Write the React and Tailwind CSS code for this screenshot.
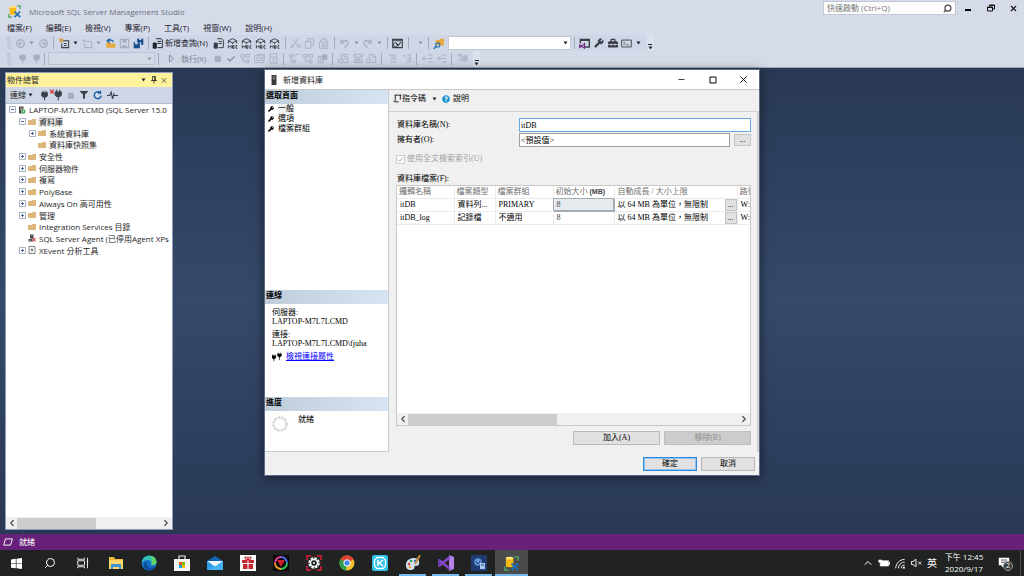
import { useState } from "react";
import clsx from "clsx";
import {
  ChevronLeft,
  ChevronRight,
  ChevronUp,
  Minus,
  Search,
  Square,
  Wrench,
  X,
} from "lucide-react";
import { FaCheck, FaFilter, FaPlug, FaQuestionCircle, FaToolbox } from "react-icons/fa";

const Svg = ({ size = "size-3", className, children }) => (
  <svg viewBox="0 0 16 16" fill="none" stroke="currentColor" className={clsx(size, "shrink-0", className)}>
    {children}
  </svg>
);

/* ---------- shared drawings ---------- */

const SsmsLogo = ({ size }) => (
  <Svg size={size}>
    <path d="M11 1h4v4M1 11v4h4" stroke="#4aa564" strokeWidth="1.6" />
    <path d="M2 2h8v9c-1 1.4-7 1.4-8 0z" fill="#f5b90f" stroke="none" />
    <ellipse cx="6" cy="2.300" rx="4" ry="1.500" fill="#ffe27a" stroke="none" />
    <path d="M8 8l7 7M15 8l-7 7" stroke="#1f6fb5" strokeWidth="2" />
  </Svg>
);

const Caret = ({ dim }) => (
  <svg viewBox="0 0 8 8" className={clsx("w-[9px] h-1 shrink-0", dim ? "text-[#8e95a5]" : "text-[#1e2330]")}>
    <path d="M0 1h8L4 7z" fill="currentColor" />
  </svg>
);

const FolderIcon = () => (
  <Svg size="size-2">
    <path d="M0 14V4h7l2-2h7v12z" fill="#dcb67a" stroke="none" />
  </Svg>
);

const ServerIcon = () => (
  <Svg size="size-2">
    <path d="M2 1h9v14H2z" fill="#424242" stroke="none" />
    <path d="M4 4h5M4 6.500h5" stroke="#fff" />
    <circle cx="11" cy="11" r="4.500" fill="#2f9e3f" stroke="#fff" />
    <path d="M10 9l3 2-3 2z" fill="#fff" stroke="none" />
  </Svg>
);

const AgentIcon = () => (
  <Svg size="size-2">
    <path d="M4 1h7v8H4zM1 10h8v5H1z" fill="#424242" stroke="none" />
    <path d="M6 4h3M3 12.500h3" stroke="#fff" />
    <path d="M9 8l6 7M15 8l-6 7" stroke="#d13438" strokeWidth="2.200" />
  </Svg>
);

const EventIcon = () => (
  <Svg size="size-2">
    <path d="M2 1h12v14H2z" fill="#fff" stroke="#555" strokeWidth="1.500" />
    <path d="M9 3L5 9h3l-1 4 4-6H8z" fill="#444" stroke="none" />
  </Svg>
);

/* ---------- toolbar drawings ---------- */

const icons = {
  back: (
    <>
      <circle cx="8" cy="8" r="5.500" strokeWidth="2" />
      <path d="M11 8H5M8 5L5 8l3 3" strokeWidth="1.500" />
    </>
  ),
  forward: (
    <>
      <circle cx="8" cy="8" r="5.500" strokeWidth="2" />
      <path d="M5 8h6M8 5l3 3-3 3" strokeWidth="1.500" />
    </>
  ),
  newProject: (
    <>
      <path d="M6 4h8v10H4V8M7 8h4M7 11h4" strokeWidth="1.500" />
      <path d="M3 0v7M0 3h7M1 1l5 5M6 1L1 6" stroke="#d98b1c" strokeWidth="1.200" />
    </>
  ),
  newItem: (
    <>
      <path d="M7 5h7v9H4V8" strokeWidth="1.500" />
      <path d="M3 1v6M0 4h6" strokeWidth="1.300" />
    </>
  ),
  open: (
    <>
      <path d="M2 14V6h5l1 2h7v6z" fill="#e5a93b" stroke="none" />
      <path d="M12 6c0-3-5-4-8-2M7 1L3 4l4 3" stroke="#1f5fa8" strokeWidth="1.800" />
    </>
  ),
  save: (
    <>
      <path d="M2 2h12v12H2z" strokeWidth="1.600" />
      <path d="M5 2h6v5H5zM5 10h6v4H5z" fill="currentColor" stroke="none" />
    </>
  ),
  saveAll: (
    <>
      <path d="M6 1h9v9h-3V6H6z" fill="#17528f" stroke="none" />
      <path d="M1 6h9v9H1z" fill="#17528f" stroke="none" />
      <path d="M3 6h4v3H3zM9 1h3v2H9z" fill="#d7deec" stroke="none" />
    </>
  ),
  query: (
    <>
      <path d="M6 1h7l2 2v11H8M8 5h5M8 8h5" strokeWidth="1.400" />
      <path d="M1 8c0-2 6-2 6 0v6c0 2-6 2-6 0z" fill="currentColor" stroke="none" />
    </>
  ),
  cube: (
    <>
      <path d="M2 8V4l6-3 6 3v4M2 4l6 3 6-3M8 7v2" strokeWidth="1.400" />
      <path d="M2 15v-4l2 2 2-2v4M8 11h2v4H8zM15 11h-2v4h2" strokeWidth="1.400" />
    </>
  ),
  cut: <path d="M4 1l6 9M12 1L6 10M3 14a2 2 0 110-4 2 2 0 010 4zM13 14a2 2 0 110-4 2 2 0 010 4z" strokeWidth="1.400" />,
  copy: <path d="M6 5V1h8v10h-4M2 5h8v10H2z" strokeWidth="1.400" />,
  paste: <path d="M4 5V3h2V1h4v2h3v3M2 6h12v9H2zM6 9h5v4H6z" strokeWidth="1.400" />,
  undo: <path d="M3 2v5h5M3 7c3-5 10-4 10 1 0 3-3 4-5 6" strokeWidth="2" />,
  redo: <path d="M13 2v5H8M13 7C10 2 3 3 3 8c0 3 3 4 5 6" strokeWidth="2" />,
  activity: (
    <>
      <path d="M1 2h14v12H1zM1 4h14" strokeWidth="1.600" />
      <path d="M6 8l3 3 4-5" strokeWidth="1.600" />
      <circle cx="5" cy="10" r="3" strokeWidth="1.400" />
    </>
  ),
  folderSearch: (
    <>
      <path d="M4 10V3h5l1-2h6v10z" fill="#e5a93b" stroke="none" />
      <circle cx="7" cy="10" r="3" stroke="#1f6fb5" strokeWidth="1.600" />
      <path d="M5 12l-4 4" stroke="#1f6fb5" strokeWidth="2" />
    </>
  ),
  vsWindow: (
    <>
      <path d="M2 8V2h13v11H9M2 3.500h13" strokeWidth="2" />
      <path d="M1 10l3 2 4-4v7l-4-3-3 2z" stroke="#68217a" strokeWidth="1.500" />
    </>
  ),
  console: <path d="M1 3h14v10H1zM4 6l2 2-2 2M8 10h3" strokeWidth="1.300" />,
  stop: <path d="M4 4h9v9H4z" fill="currentColor" stroke="none" />,
  play: <path d="M5 3v10l6-5z" strokeWidth="1.300" />,
  plan: <path d="M1 2h5v4H1zM9 2h5v4H9zM4 6v6h4M9 10h4v4H9zM6 4h3" strokeWidth="1.300" />,
  layers: <path d="M4 4V2h11v9h-2M1 4h12v10H1zM4 7h6v4H4z" strokeWidth="1.300" />,
  page: <path d="M3 1h10v14H3zM6 9h4M6 12h4M3 6h10" strokeWidth="1.300" />,
  diagram: <path d="M1 2h4v4H1zM5 4h4M9 2h5M3 6v6h3M6 10h3v4H6z" strokeWidth="1.300" />,
  results: (
    <>
      <path d="M7 2h8v8H7z" fill="currentColor" stroke="none" />
      <path d="M2 5h7v9H2zM4 8h3M4 11h3" strokeWidth="1.300" />
    </>
  ),
  text: <path d="M5 10V2h9v12H8M8 5h4M8 8h4M1 9h6v5H1z" strokeWidth="1.300" />,
  grid: <path d="M3 2h12v4H3zM6 6v8M10 6v8M3 10h12v4H3z" strokeWidth="1.400" />,
  file: <path d="M5 8V2h5l4 4v8H9M10 2v4h4M1 9h6v5H1z" strokeWidth="1.300" />,
  comment: <path d="M2 3h12M6 6h8M6 9h8M5 13h9" strokeWidth="1.300" />,
  uncomment: <path d="M8 3h6v10H8M9 7h4M9 10h4M2 4c3-2 5 0 3 3" strokeWidth="1.300" />,
  outdent: <path d="M9 3h6M9 8h6M9 13h6M7 8H1M4 5L1 8l3 3" strokeWidth="1.400" />,
  indent: <path d="M9 3h6M9 8h6M9 13h6M1 8h6M4 5l3 3-3 3" strokeWidth="1.400" />,
  params: <path d="M1 3h6M4 1v5M11 4a4 4 0 110 8 4 4 0 010-8zM8 8h6M11 5v6M2 8l4 4" strokeWidth="1.500" />,
  plugs: <path d="M7 4h8v4l-2 2h-4L7 8zM9 1v3M13 1v3M11 10v5" fill="currentColor" strokeWidth="1.500" />,
};

const ToolButton = ({ name, label, dim, children }) => (
  <button
    aria-label={label || name}
    className={clsx("w-[14px] h-[14px] shrink-0 flex items-center justify-center", dim ? "text-[#a9afbd]" : "text-[#3b3f4a]")}
  >
    {children || <Svg size="size-[11px]">{icons[name]}</Svg>}
  </button>
);

const Sep = () => <span className="w-px h-3 mx-[3px] shrink-0 bg-[#a3abba]" />;

const Grip = () => (
  <svg className="w-1 h-3 shrink-0 text-[#9da5b6]">
    <path d="M1 0v12M3 1v11" stroke="currentColor" strokeDasharray="1 1" />
  </svg>
);

const Overflow = () => (
  <button aria-label="toolbar options" className="w-[7px] h-4 ml-1 shrink-0 flex flex-col items-center justify-end pb-px bg-[#dce1ee]">
    <span className="w-1 h-px bg-[#1e2330] mb-px" />
    <Caret />
  </button>
);

const menus = ["檔案(F)", "編輯(E)", "檢視(V)", "專案(P)", "工具(T)", "視窗(W)", "說明(H)"];

const Header = () => (
  <header className="shrink-0 bg-[#d6dbe9] border-b border-[#a0a6b3] pb-px">
    <div className="flex items-start justify-between h-5">
      <div className="flex items-center gap-2 pl-2 pt-1 h-[19px]">
        <SsmsLogo size="size-[13px]" />
        <h1 className="text-[8px] text-[#6b7180]">Microsoft SQL Server Management Studio</h1>
      </div>
      <div className="flex items-center pt-px">
        <label className="w-[133px] h-[14px] flex items-center bg-[#fcfcfc] border border-[#c3c9d8] px-[3px] text-[#444]">
          <input
            aria-label="快速啟動"
            placeholder="快速啟動 (Ctrl+Q)"
            className="flex-1 min-w-0 text-[8px] leading-3 outline-none placeholder:text-[#777]"
          />
          <Search className="size-[9px] -scale-x-100" strokeWidth={3} />
        </label>
        <div className="flex text-[#111]">
          <button aria-label="minimize" className="w-6 h-[14px] flex items-center justify-center pt-1">
            <span className="w-[6px] h-[2px] bg-black" />
          </button>
          <button aria-label="restore" className="w-[22px] h-[14px] flex items-center justify-center">
            <Svg size="size-2">
              <path d="M5 5V2h10v8h-3M5 3h10M1 6h10v8H1zM1 7h10" strokeWidth="2" />
            </Svg>
          </button>
          <button aria-label="close" className="w-[22px] h-[14px] flex items-center justify-center">
            <X className="size-[9px]" strokeWidth={3} />
          </button>
        </div>
      </div>
    </div>

    <nav className="flex items-center gap-[14px] h-[15px] pl-[7px] text-[8px] text-[#1e2330]">
      {menus.map((menu) => (
        <button key={menu} className="whitespace-nowrap">{menu}</button>
      ))}
    </nav>

    {/* Standard toolbar */}
    <div className="flex">
      <div className="flex items-center h-4 pl-[7px] bg-[#cfd6e5] text-[8px]">
        <Grip />
        <div className="flex items-center pl-0.5">
          <ToolButton name="back" dim />
          <Caret dim />
          <ToolButton name="forward" dim />
        </div>
        <Sep />
        <ToolButton name="newProject" />
        <Caret />
        <ToolButton name="newItem" dim />
        <Caret dim />
        <ToolButton name="open" />
        <ToolButton name="save" dim />
        <ToolButton name="saveAll" />
        <Sep />
        <button className="flex items-center gap-0.5 mr-1 whitespace-nowrap text-[#1e2330]">
          <Svg size="size-[11px]">{icons.query}</Svg>
          新增查詢(N)
        </button>
        <ToolButton name="query" label="database engine query" />
        <ToolButton name="cube" label="MDX" />
        <ToolButton name="cube" label="DMX" />
        <ToolButton name="cube" label="XMLA" />
        <ToolButton name="cube" label="DAX" />
        <Sep />
        <ToolButton name="cut" dim />
        <ToolButton name="copy" dim />
        <ToolButton name="paste" dim />
        <Sep />
        <ToolButton name="undo" dim />
        <Caret dim />
        <ToolButton name="redo" dim />
        <Caret dim />
        <Sep />
        <ToolButton name="activity" />
        <Sep />
        <div className="flex items-center pl-1">
          <Caret dim />
        </div>
        <Sep />
        <div className="flex items-center gap-0.5">
          <ToolButton name="folderSearch" />
          <button aria-label="find" className="w-[123px] h-[14px] flex items-center justify-end bg-white border border-[#c3c9d8]">
            <Caret />
          </button>
        </div>
        <Sep />
        <ToolButton name="vsWindow" />
        <ToolButton label="properties">
          <Wrench className="size-[10px] fill-current" />
        </ToolButton>
        <ToolButton label="toolbox">
          <FaToolbox className="size-[10px]" />
        </ToolButton>
        <ToolButton name="console" />
        <Caret />
        <Overflow />
      </div>
    </div>

    {/* SQL editor toolbar */}
    <div className="flex">
      <div className="flex items-center h-[15px] pl-[7px] bg-[#cfd6e5] text-[8px]">
        <Grip />
        <div className="flex items-center pl-0.5">
          <ToolButton name="plugs" label="connect" dim />
          <ToolButton name="plugs" label="change connection" dim />
        </div>
        <Sep />
        <button aria-label="database" className="w-[107px] h-[13px] flex items-center justify-end border border-[#bcc4d4] bg-[#d3d9e7]">
          <Caret dim />
        </button>
        <Sep />
        <button className="flex items-center gap-1 mx-1 whitespace-nowrap text-[#7c8292]">
          <Svg size="size-[11px]">{icons.play}</Svg>
          執行(X)
        </button>
        <ToolButton name="stop" dim />
        <ToolButton label="parse" dim>
          <FaCheck className="size-2 text-[#8e94a3]" />
        </ToolButton>
        <ToolButton name="plan" dim />
        <ToolButton name="layers" dim />
        <ToolButton name="page" dim />
        <Sep />
        <ToolButton name="diagram" dim />
        <ToolButton name="plan" label="live statistics" dim />
        <ToolButton name="results" dim />
        <Sep />
        <ToolButton name="text" dim />
        <ToolButton name="grid" dim />
        <ToolButton name="file" dim />
        <Sep />
        <ToolButton name="comment" dim />
        <ToolButton name="uncomment" dim />
        <Sep />
        <ToolButton name="outdent" dim />
        <ToolButton name="indent" dim />
        <Sep />
        <ToolButton name="params" dim />
        <Overflow />
      </div>
    </div>
  </header>
);

/* ---------- object explorer ---------- */

const tree = [
  { name: "LAPTOP-M7L7LCMD (SQL Server 15.0", level: 0, toggle: "-", icon: <ServerIcon /> },
  { name: "資料庫", level: 1, toggle: "-", selected: true },
  { name: "系統資料庫", level: 2, toggle: "+" },
  { name: "資料庫快照集", level: 2 },
  { name: "安全性", level: 1, toggle: "+" },
  { name: "伺服器物件", level: 1, toggle: "+" },
  { name: "複寫", level: 1, toggle: "+" },
  { name: "PolyBase", level: 1, toggle: "+" },
  { name: "Always On 高可用性", level: 1, toggle: "+" },
  { name: "管理", level: 1, toggle: "+" },
  { name: "Integration Services 目錄", level: 1 },
  { name: "SQL Server Agent (已停用Agent XPs", level: 1, icon: <AgentIcon /> },
  { name: "XEvent 分析工具", level: 1, toggle: "+", icon: <EventIcon /> },
];

const indents = ["pl-[3px]", "pl-[13px]", "pl-[23px]"];

const Toggle = ({ type }) => (
  <svg viewBox="0 0 7 7" className="size-[7px] shrink-0">
    {type && (
      <>
        <path d="M.5.5h6v6h-6z" fill="#fff" stroke="#a9b1c0" />
        <path d={type === "+" ? "M2 3.500h3M3.500 2v3" : "M2 3.500h3"} stroke="#4a659b" />
      </>
    )}
  </svg>
);

const ScrollBar = ({ thumb }) => (
  <div className="flex items-center h-3 shrink-0 bg-[#f0f0f0] text-[#505050]">
    <button aria-label="scroll left" className="w-[11px] flex justify-center">
      <ChevronLeft className="size-[10px]" strokeWidth={3} />
    </button>
    <div className="flex-1 h-[11px]">
      <div className={clsx("h-full bg-[#cdcdcd]", thumb)} />
    </div>
    <button aria-label="scroll right" className="w-3 flex justify-center">
      <ChevronRight className="size-[10px]" strokeWidth={3} />
    </button>
  </div>
);

const ObjectExplorer = () => (
  <aside className="w-[168px] shrink-0 flex flex-col bg-white border border-[#8e9bbc] text-[8px] text-[#1e1e1e]">
    <div className="flex items-center h-[14px] pl-px pr-1 bg-[#fff29d]">
      <h2 className="flex-1">物件總管</h2>
      <Caret />
      <button aria-label="pin" className="w-3 flex justify-center">
        <Svg size="size-2">
          <path d="M5 1h6v8H5zM9 1v8M2 9h12M8 9v6" strokeWidth="1.500" />
        </Svg>
      </button>
      <button aria-label="close panel" className="w-2 flex justify-center">
        <X className="size-[9px]" strokeWidth={2} />
      </button>
    </div>
    <div className="flex items-center h-4 pl-1 bg-[#cfd6e5]">
      <button className="flex items-center whitespace-nowrap">
        連線 <Caret />
      </button>
      <ToolButton name="plugs" label="connect" />
      <ToolButton label="disconnect">
        <Svg size="size-[12px]">
          <path d="M7 4h8v4l-2 2h-4L7 8zM9 1v3M13 1v3M11 10v5" fill="currentColor" strokeWidth="1.500" />
          <path d="M0 1l5 5M5 1L0 6" stroke="#d13438" strokeWidth="1.500" />
        </Svg>
      </ToolButton>
      <ToolButton name="stop" dim />
      <ToolButton label="filter">
        <FaFilter className="size-2" />
      </ToolButton>
      <ToolButton label="refresh">
        <Svg size="size-[10px]" className="text-[#0f5ca8]">
          <path d="M13 9a5.500 5.500 0 11-2-5M12 1v4H8" strokeWidth="2.200" />
        </Svg>
      </ToolButton>
      <ToolButton label="activity">
        <Svg size="size-[11px]">
          <path d="M0 8h4l2-5 2 10 2-7 1 2h5" strokeWidth="1.600" />
        </Svg>
      </ToolButton>
    </div>
    <div className="flex-1 min-h-0 border-t border-[#b5bdcd]">
      <ul className="h-[152px] flex flex-col overflow-hidden">
        {tree.map((node) => (
          <li key={node.name} className={clsx("flex-1 min-h-0 flex items-center whitespace-nowrap", indents[node.level])}>
            <Toggle type={node.toggle} />
            <span className="w-3 flex justify-center shrink-0">{node.icon || <FolderIcon />}</span>
            <span className={clsx("leading-[11px] pl-px", node.selected && "bg-[#ececec]")}>{node.name}</span>
          </li>
        ))}
      </ul>
    </div>
    <ScrollBar thumb="w-[55%]" />
  </aside>
);

/* ---------- new database dialog ---------- */

const pages = ["一般", "選項", "檔案群組"];

const files = [
  { name: "itDB", type: "資料列...", group: "PRIMARY", size: 8, growth: "以 64 MB 為單位，無限制", path: "W:\\" },
  { name: "itDB_log", type: "記錄檔", group: "不適用", size: 8, growth: "以 64 MB 為單位，無限制", path: "W:\\" },
];

const SectionTitle = ({ children }) => (
  <h3 className="h-[14px] shrink-0 flex items-start leading-3 px-px font-bold text-black bg-linear-to-r from-[#bfcddb] to-[#d7e4f2]">
    {children}
  </h3>
);

const DialogButton = ({ primary, wide, disabled, children }) => (
  <button
    disabled={disabled}
    className={clsx(
      "h-[14px] flex items-center justify-center border",
      wide ? "w-[87px]" : "w-[54px]",
      disabled ? "bg-[#cccccc] border-[#bfbfbf] text-[#8c8c8c]" : "bg-[#e1e1e1]",
      !disabled && (primary ? "border-[#2b8ade] outline outline-[#8fc3ee] -outline-offset-2" : "border-[#b9b9b9]")
    )}
  >
    {children}
  </button>
);

const MoreButton = ({ className }) => (
  <button aria-label="browse" className={clsx("flex items-center justify-center bg-[#e1e1e1] border border-[#c4c4c4] leading-none", className)}>
    ...
  </button>
);

const NewDatabaseDialog = () => {
  const [page, setPage] = useState(pages[0]);
  const [dbName, setDbName] = useState("itDB");
  const [owner, setOwner] = useState("<預設值>");

  return (
    <section
      role="dialog"
      aria-labelledby="dialog-title"
      className="absolute top-px inset-x-0 mx-auto w-[496px] flex flex-col bg-[#f0f0f0] border border-[#5d6b85] shadow-[0_2px_10px_rgba(0,0,0,0.5)] text-[8px] text-black font-['Liberation_Serif','Noto_Sans_CJK_TC',serif]"
    >
      <div className="h-5 flex items-center pl-1 bg-white border-b border-[#c8c8c8] font-['Open_Sans','Noto_Sans_CJK_TC',sans-serif]">
        <Svg size="size-[10px]">
          <path d="M4 0h8v16H4z" fill="#3a3a3a" stroke="none" />
          <path d="M6 3h4M6 6h4" stroke="#ccc" />
        </Svg>
        <h2 id="dialog-title" className="flex-1 pl-1 text-[#222]">新增資料庫</h2>
        <button aria-label="minimize dialog" className="w-[31px] flex justify-center">
          <Minus className="size-[9px]" strokeWidth={2} />
        </button>
        <button aria-label="maximize dialog" className="w-[31px] flex justify-center">
          <Svg size="size-2">
            <path d="M2 2h12v12H2z" strokeWidth="2" />
          </Svg>
        </button>
        <button aria-label="close dialog" className="w-[31px] flex justify-center">
          <X className="size-[11px]" strokeWidth={2} />
        </button>
      </div>

      <div className="flex">
        {/* Left column */}
        <div className="w-[124px] h-[362px] shrink-0 flex flex-col bg-white border-r border-b border-[#c5cbd3]">
          <SectionTitle>選取頁面</SectionTitle>
          <ul className="flex-1">
            {pages.map((item) => (
              <li key={item} className="h-[10px]">
                <button onClick={() => setPage(item)} className="flex items-center gap-1 pl-[3px] leading-[10px]">
                  <Wrench className="size-[6px] fill-current" strokeWidth={3} />
                  <span className={clsx(page === item && "bg-[#f0f0f0]")}>{item}</span>
                </button>
              </li>
            ))}
          </ul>

          <SectionTitle>連線</SectionTitle>
          <div className="h-[93px] pt-1 pl-[7px] leading-[9px]">
            <p>伺服器:</p>
            <p>LAPTOP-M7L7LCMD</p>
            <p className="mt-1">連接:</p>
            <p>LAPTOP-M7L7LCMD\fjuha</p>
            <p className="flex items-center gap-1 mt-1">
              <Svg size="size-[10px]">
                <path d="M0 6h6v3l-2 2H2L0 9zM1 4v2M5 4v2M3 11v4M9 3h6v3l-2 2h-2L9 6zM10 1v2M14 1v2M12 8v5" fill="currentColor" />
              </Svg>
              <a href="#connection" className="text-[#0000ff] underline leading-[10px]">檢視連接屬性</a>
            </p>
          </div>

          <SectionTitle>進度</SectionTitle>
          <div className="h-10 flex items-start gap-[9px] pt-1 pl-[6px]">
            <svg viewBox="0 0 18 18" className="size-[18px]">
              <circle cx="9" cy="9" r="6.500" fill="none" stroke="#d6d6d6" strokeWidth="2.500" strokeDasharray="2.600 0.800" />
            </svg>
            <span className="leading-[10px]">就緒</span>
          </div>
        </div>

        {/* Right column */}
        <div className="flex-1 min-w-0 flex flex-col">
          <div className="h-[22px] flex items-center pl-1 pb-1 border-b border-[#d0d0d0]">
            <button className="flex items-center">
              <Svg size="size-[9px]">
                <path d="M3 2h12M13 2v8M4 2v10c0 2-3 2-3 0M4 14h6" strokeWidth="1.500" />
              </Svg>
              指令碼
            </button>
            <span className="pl-1"><Caret /></span>
            <button className="flex items-center gap-[3px] pl-[3px]">
              <FaQuestionCircle className="size-2 text-[#1793d1]" />
              說明
            </button>
          </div>

          <div className="flex-1 flex flex-col pl-[7px] pr-[6px] pt-[6px] border-r-2 border-[#cfcfcf]">
            <div className="flex items-center">
              <label htmlFor="db-name" className="w-[123px] pl-px">資料庫名稱(N):</label>
              <input
                id="db-name"
                value={dbName}
                onChange={(e) => setDbName(e.target.value)}
                className="flex-1 min-w-0 h-[14px] px-px bg-white border border-[#64a9e2] outline-none"
              />
            </div>
            <div className="flex items-center mt-px">
              <label htmlFor="db-owner" className="w-[123px] pl-px">擁有者(O):</label>
              <input
                id="db-owner"
                value={owner}
                onChange={(e) => setOwner(e.target.value)}
                className="flex-1 min-w-0 h-[14px] px-px pb-0.5 bg-white border border-[#a0a0a0] outline-none"
              />
              <MoreButton className="w-[17px] h-3 ml-1" />
            </div>
            <label className="flex items-center gap-0.5 mt-[6px] h-3 text-[#a0a0a0]">
              <input type="checkbox" checked disabled readOnly className="peer sr-only" />
              <span className="size-[9px] flex items-center justify-center bg-white border border-[#cccccc]">
                <Svg size="size-[7px]">
                  <path d="M2 8l4 4 8-9" strokeWidth="2" />
                </Svg>
              </span>
              使用全文檢索索引(U)
            </label>

            <p id="files-label" className="mt-2 h-3 leading-3 pl-px">資料庫檔案(F):</p>
            <div className="h-[241px] flex flex-col bg-white border border-[#c8c8c8] overflow-hidden">
              <div className="flex-1 min-h-0 overflow-hidden">
                <table aria-labelledby="files-label" className="w-[400px] table-fixed border-collapse whitespace-nowrap leading-[10px]">
                  <colgroup>
                    <col className="w-[57px]" />
                    <col className="w-[41px]" />
                    <col className="w-[58px]" />
                    <col className="w-[61px]" />
                    <col className="w-[123px]" />
                    <col />
                  </colgroup>
                  <thead>
                    <tr className="h-3 text-left text-[#707070]">
                      {["邏輯名稱", "檔案類型", "檔案群組"].map((title) => (
                        <th key={title} className="pl-0.5 font-normal border-r border-b border-[#ececec]">{title}</th>
                      ))}
                      <th className="pl-0.5 font-normal border-r border-b border-[#ececec]">
                        初始大小 <b className="font-['Liberation_Sans',sans-serif] text-[7px] text-[#444]">(MB)</b>
                      </th>
                      <th className="pl-[3px] font-normal border-r border-b border-[#ececec]">自動成長 / 大小上限</th>
                      <th className="pl-0.5 font-normal border-b border-[#ececec]">路徑</th>
                    </tr>
                  </thead>
                  <tbody>
                    {files.map((file, index) => (
                      <tr key={file.name} className="h-[13px]">
                        <td className="pl-[3px] border-r border-b border-[#ececec]">{file.name}</td>
                        <td className="pl-[3px] border-r border-b border-[#ececec]">{file.type}</td>
                        <td className="pl-[3px] border-r border-b border-[#ececec]">{file.group}</td>
                        <td
                          className={clsx(
                            "pl-[3px] border-r border-b text-[#444]",
                            index === 0 ? "bg-[#e6ebf0] border-[#a3abb3] outline outline-[#a3abb3] -outline-offset-1" : "border-[#ececec]"
                          )}
                        >
                          {file.size}
                        </td>
                        <td className="pl-[3px] border-r border-b border-[#ececec]">
                          <div className="flex items-center justify-between">
                            {file.growth}
                            <MoreButton className="w-3 h-3" />
                          </div>
                        </td>
                        <td className="pl-[3px] border-b border-[#ececec]">{file.path}</td>
                      </tr>
                    ))}
                  </tbody>
                </table>
              </div>
              <ScrollBar thumb="w-[45%]" />
            </div>

            <div className="flex justify-end gap-1 pt-[5px] pb-[6px]">
              <DialogButton wide>加入(A)</DialogButton>
              <DialogButton wide disabled>移除(R)</DialogButton>
            </div>
          </div>
        </div>
      </div>

      <div className="h-[23px] flex items-start justify-end gap-1 pt-[5px] pr-1">
        <DialogButton primary>確定</DialogButton>
        <DialogButton>取消</DialogButton>
      </div>
    </section>
  );
};

/* ---------- windows taskbar ---------- */

const taskIcons = [
  {
    name: "file explorer",
    art: (
      <>
        <path d="M1 2h5l1 2h8v10H1z" fill="#f0b93a" stroke="none" />
        <path d="M1 5h14v9H1z" fill="#ffd768" stroke="none" />
        <path d="M3 14V9h10v5h-2v-2H5v2z" fill="#3f8fd2" stroke="none" />
      </>
    ),
  },
  {
    name: "edge",
    art: (
      <>
        <circle cx="8" cy="8" r="7.500" fill="#1473c8" stroke="none" />
        <path d="M1 6C3-1 15-1 15.500 7c0 3-4 4-5.500 2 1-2-1-4-3-4-3 0-5 1-6 3z" fill="#35c1b4" stroke="none" />
        <path d="M9 1c4 0 6.500 3 6.500 6 0 3-4 4-5.500 2 2-3 1-6-1-8z" fill="#63d46a" stroke="none" />
        <path d="M6 8c-1 4 3 6 8 4-3 4-9 4-11 0C2 9 4 6 6 8z" fill="#0d4a99" stroke="none" />
      </>
    ),
  },
  {
    name: "store",
    art: (
      <>
        <path d="M5 5V1h6v4" stroke="#eee" strokeWidth="1.200" />
        <path d="M0 4h16v12H0z" fill="#f4f4f4" stroke="none" />
        <path d="M5 7h3v3H5z" fill="#f25022" stroke="none" />
        <path d="M8 7h3v3H8z" fill="#7fba00" stroke="none" />
        <path d="M5 10h3v3H5z" fill="#00a4ef" stroke="none" />
        <path d="M8 10h3v3H8z" fill="#ffb900" stroke="none" />
      </>
    ),
  },
  {
    name: "mail",
    art: (
      <>
        <path d="M0 6l8-5 8 5v9H0z" fill="#1066b5" stroke="none" />
        <path d="M0 6h16l-8 6z" fill="#f2f8fd" stroke="none" />
        <path d="M0 6l8 6-8 3z" fill="#2a9be8" stroke="none" />
        <path d="M16 6v9H0z" fill="#44b0f0" stroke="none" />
        <path d="M1 6h14l-6 5z" fill="#f2f8fd" stroke="none" />
      </>
    ),
  },
  {
    name: "gift",
    art: (
      <>
        <path d="M0 0h16v16H0z" fill="#fff" stroke="none" />
        <path d="M2 5h12v3H2zM3 9h10v5H3z" fill="#c3272b" stroke="none" />
        <path d="M8 5v9" stroke="#fff" />
        <path d="M8 5C5 5 4 2 6 2s2 3 2 3 0-3 2-3 1 3-2 3z" stroke="#c3272b" strokeWidth="1.200" />
      </>
    ),
  },
  {
    name: "rgb",
    art: (
      <>
        <path d="M0 0h16v16H0z" fill="#0b0b0b" stroke="none" />
        <path d="M2 8a6 6 0 016-6" stroke="#e040a0" strokeWidth="1.800" />
        <path d="M8 2a6 6 0 016 6" stroke="#4a6cf0" strokeWidth="1.800" />
        <path d="M14 8a6 6 0 01-6 6" stroke="#35c85a" strokeWidth="1.800" />
        <path d="M8 14a6 6 0 01-6-6" stroke="#f0a020" strokeWidth="1.800" />
        <path d="M4 5h8l-4 7z" fill="#d01f2f" stroke="none" />
      </>
    ),
  },
  {
    name: "gear",
    art: (
      <>
        <path d="M1 5V1h4M11 1h4v4M15 11v4h-4M5 15H1v-4" stroke="#b01e36" strokeWidth="2" />
        <path d="M0 8h16M8 0v16" stroke="#7a1526" />
        <circle cx="8" cy="8" r="4.500" stroke="#eafaf6" strokeWidth="2.500" strokeDasharray="2.400 1.100" />
        <circle cx="8" cy="8" r="3.500" fill="#202020" stroke="#eafaf6" strokeWidth="1.500" />
        <circle cx="8" cy="8" r="1" fill="#fff" stroke="none" />
      </>
    ),
  },
  {
    name: "chrome",
    art: (
      <>
        <circle cx="8" cy="8" r="7.500" fill="#f2c02e" stroke="none" />
        <path d="M8 8L1.500 4.200A7.500 7.500 0 0114.500 4.200z" fill="#de4032" stroke="none" />
        <path d="M8 8L1.500 4.200A7.500 7.500 0 007 15.500z" fill="#2f9e4f" stroke="none" />
        <circle cx="8" cy="8" r="3.200" fill="#4285f4" stroke="#fff" />
      </>
    ),
  },
  {
    name: "kkbox",
    art: (
      <>
        <rect x="0" y="0" width="16" height="16" rx="2" fill="#2fc4e8" stroke="none" />
        <path d="M5 2.500h6l2.500 2.500v6L11 13.500H5L2.500 11V5z" stroke="#fff" strokeWidth="1.300" />
        <path d="M6 5v6M11 5L7.500 8l3.500 3" stroke="#fff" strokeWidth="1.600" />
      </>
    ),
  },
  {
    name: "paint",
    running: true,
    art: (
      <>
        <path d="M1 10C1 5 5 3 9 3s6 3 5 6-3 1-4 2 0 4-4 4-5-2-5-5z" fill="#cfe0ee" stroke="none" />
        <circle cx="4" cy="9" r="1.200" fill="#d13438" stroke="none" />
        <circle cx="6" cy="6" r="1.200" fill="#2f9e4f" stroke="none" />
        <circle cx="10" cy="6" r="1.200" fill="#2a70c8" stroke="none" />
        <circle cx="5" cy="12" r="1.200" fill="#f2a02e" stroke="none" />
        <path d="M15 0l-5 9" stroke="#c98a3d" strokeWidth="2" />
      </>
    ),
  },
  {
    name: "visual studio",
    running: true,
    art: (
      <>
        <path d="M11 0l5 2v12l-5 2z" fill="#b583e8" stroke="none" />
        <path d="M1 5l11 9M1 11l11-9" stroke="#8647c8" strokeWidth="2.500" />
        <path d="M1 4v8" stroke="#6a3aa8" strokeWidth="2" />
      </>
    ),
  },
  {
    name: "config",
    running: true,
    art: (
      <>
        <path d="M0 0h16v16H0z" fill="#1f3a70" stroke="none" />
        <circle cx="7" cy="7" r="2.500" fill="#7fb0ea" stroke="#5f94dc" strokeWidth="2.500" />
        <path d="M5 6l2 3 2-3" stroke="#1f3a70" />
        <path d="M9 8h5v6H9z" fill="#a9caf2" stroke="none" />
        <path d="M10 10h3" stroke="#1f3a70" />
      </>
    ),
  },
];

const TaskButton = ({ label, running, active, children }) => (
  <button
    aria-label={label}
    className={clsx(
      "h-full shrink-0 flex items-center justify-center border-b-2 pt-0.5",
      running ? "border-[#76b9ed]" : "border-transparent",
      active ? "w-[33px] bg-[#4a4c4c] bg-clip-padding" : "w-[27px] mx-[3px]"
    )}
  >
    {children}
  </button>
);

const Taskbar = () => (
  <footer className="h-[26px] shrink-0 flex items-center justify-between bg-[#202322] text-white">
    <div className="flex h-full">
      <TaskButton label="start">
        <Svg size="size-[11px]">
          <path d="M0 2l7-1v6.500H0zM8 1l8-1v7.500H8zM0 8.500h7V15l-7-1zM8 8.500h8V16l-8-1z" fill="#fff" stroke="none" />
        </Svg>
      </TaskButton>
      <TaskButton label="search">
        <Search className="size-3 -scale-x-100" strokeWidth={2} />
      </TaskButton>
      <TaskButton label="task view">
        <Svg>
          <path d="M1 1v2h9V1M1 15v-2h9v2M1 5h9v6H1zM14 1v14M13 6h2" strokeWidth="1.200" />
        </Svg>
      </TaskButton>
      {taskIcons.map((item) => (
        <TaskButton key={item.name} label={item.name} running={item.running}>
          <Svg size="size-4">{item.art}</Svg>
        </TaskButton>
      ))}
      <TaskButton label="ssms" running active>
        <SsmsLogo size="size-[15px]" />
      </TaskButton>
    </div>

    <div className="flex items-center h-full">
      <button aria-label="hidden icons" className="w-4 flex justify-center">
        <ChevronUp className="size-3" strokeWidth={2} />
      </button>
      <button aria-label="battery" className="w-4 flex justify-center">
        <Svg>
          <path d="M3 5h11v7H3zM15 7h1v3h-1zM1 4h4v3H1z" fill="#fff" stroke="#fff" strokeWidth="0.800" />
        </Svg>
      </button>
      <button aria-label="network" className="w-4 flex justify-center">
        <Svg size="size-[11px]">
          <path d="M1 15C1 8 7 2 14 2M5 15c0-5 4-9 9-9M9 15c0-3 2-5 5-5" strokeWidth="1.300" />
          <circle cx="13" cy="14" r="1.500" fill="#fff" stroke="none" />
        </Svg>
      </button>
      <button aria-label="volume" className="w-4 flex justify-center">
        <Svg>
          <path d="M2 6h2l4-3v10l-4-3H2zM11 6l4 4M15 6l-4 4" strokeWidth="1.200" />
        </Svg>
      </button>
      <span className="w-4 text-center text-[10px]">英</span>
      <div className="w-12 text-center text-[8px] leading-3">
        <p>下午 12:45</p>
        <p>2020/9/17</p>
      </div>
      <button aria-label="notifications" className="relative w-8 flex justify-center">
        <Svg size="size-3">
          <path d="M1 1h14v10H8l-3 3v-3H1z" fill="#fff" stroke="none" />
          <path d="M4 4h8M4 7h8" stroke="#202322" />
        </Svg>
        <span className="absolute left-[15px] top-1 size-[10px] rounded-full bg-[#3c3f3e] border border-[#999] text-[7px] leading-2">2</span>
      </button>
      <span className="w-px h-full mr-[3px] bg-[#4a4c4c]" />
    </div>
  </footer>
);

const App = () => (
  <div className="h-screen flex flex-col overflow-hidden font-['Open_Sans','Noto_Sans_CJK_TC',sans-serif]">
    <Header />
    <main className="relative flex-1 min-h-0 flex pl-[5px] pt-1 pb-1 bg-linear-to-b from-[#293955] via-[#35496a] to-[#293955]">
      <ObjectExplorer />
      <NewDatabaseDialog />
    </main>
    <div className="h-4 shrink-0 flex items-center gap-[6px] pl-[3px] bg-[#68217a] text-white text-[8px]">
      <Svg size="size-[10px]">
        <path d="M4 3h11l-3 10H1z" strokeWidth="1.500" />
      </Svg>
      就緒
    </div>
    <Taskbar />
  </div>
);

export default App;
